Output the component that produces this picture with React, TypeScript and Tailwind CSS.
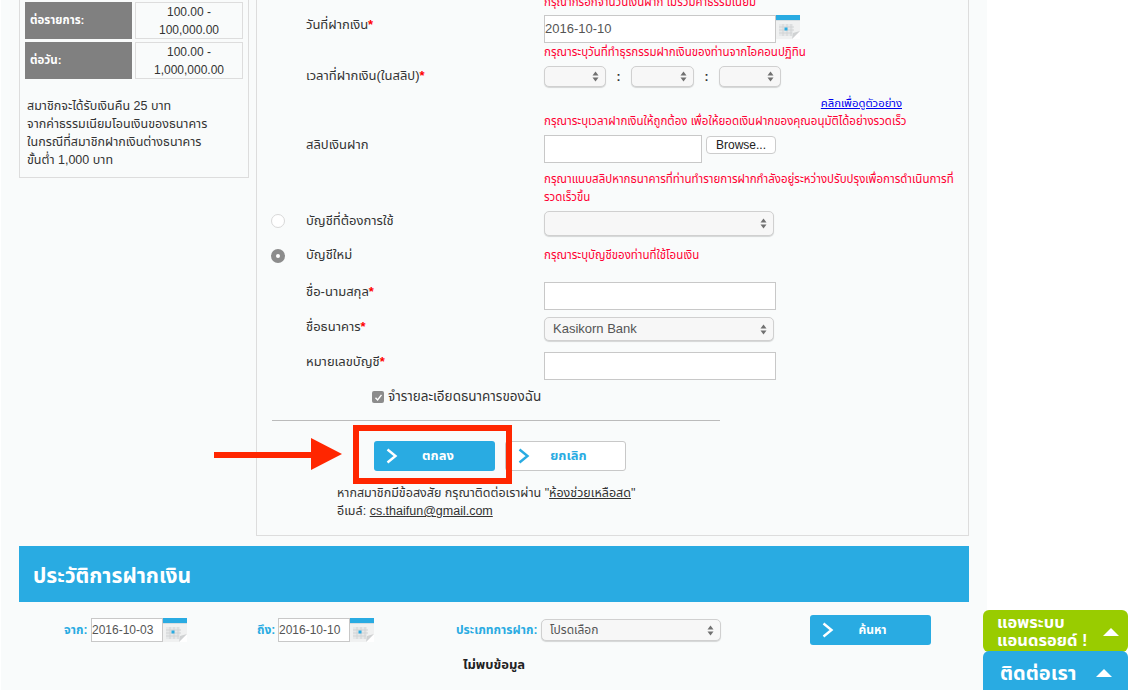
import type { ReactNode } from 'react';

const font = "font-['Liberation_Sans','Noto_Sans_Thai','Noto_Sans',sans-serif]";

function Required() {
  return <span className="font-bold text-[#ff0000]">*</span>;
}

function ErrorText({ children, className = '' }: { children: ReactNode; className?: string }) {
  return <div className={`text-[11.5px] leading-[18px] text-[#ff0033] ${className}`}>{children}</div>;
}

function Row({ radio, label, children, className = '' }: { radio?: ReactNode; label?: ReactNode; children?: ReactNode; className?: string }) {
  return (
    <div className={`grid grid-cols-[35px_238px_1fr] items-start ${className}`}>
      <div>{radio}</div>
      <div className="text-[13px] leading-[18px] text-[#333333]">{label}</div>
      <div>{children}</div>
    </div>
  );
}

function Arrows() {
  return (
    <svg width="7" height="11" viewBox="0 0 7 11" className="shrink-0">
      <path d="M3.5 0.5 L6.5 4.5 L0.5 4.5 Z" fill="#707070" />
      <path d="M3.5 10.5 L6.5 6.5 L0.5 6.5 Z" fill="#707070" />
    </svg>
  );
}

function SelectBox({ text, className = '' }: { text?: string; className?: string }) {
  return (
    <div className={`flex items-center justify-between rounded-[5px] border border-[#d0d0d0] bg-[#f7f7f7] pl-2 pr-[6px] text-xs text-[#555555] shadow-[0_1px_1px_rgba(0,0,0,0.15)] ${className}`}>
      <span>{text}</span>
      <Arrows />
    </div>
  );
}

function TextBox({ value, className = '' }: { value?: string; className?: string }) {
  return (
    <div className={`flex items-center border border-[#c8c8c8] bg-white text-xs text-[#555555] ${className}`}>
      {value}
    </div>
  );
}

function CalendarIcon() {
  return (
    <svg width="24" height="24" viewBox="0 0 24 24" className="shrink-0">
      <rect x="0" y="0" width="24" height="24" fill="#f0f1f1" />
      <rect x="0" y="0" width="24" height="5" fill="#29abe2" />
      <rect x="0" y="5" width="24" height="1" fill="#d6dde0" />
      <rect x="3" y="9" width="14" height="12" fill="#e6e8e9" />
      <path d="M3 12H18M3 15H18M3 18H16M7 9V21M11 9V21M15 9V21" stroke="#d2d4d5" strokeWidth="1" />
      <rect x="8.5" y="12.5" width="3" height="3" fill="#29abe2" />
      <path d="M16 24 L24 16 L24 24 Z" fill="#ffffff" />
      <path d="M16 24 L24 16 L17 18 Z" fill="#d0d2d3" />
    </svg>
  );
}

function Chevron({ color, className = '' }: { color: string; className?: string }) {
  return (
    <svg width="12" height="16" viewBox="0 0 12 16" fill="none" className={className}>
      <path d="M1.5 1.5 L9.5 8 L1.5 14.5" stroke={color} strokeWidth="2.4" />
    </svg>
  );
}

function ActionButton({ text, filled, className = '' }: { text: string; filled?: boolean; className?: string }) {
  return (
    <div className={`relative flex items-center justify-center rounded-[3px] font-bold ${filled ? 'bg-[#29abe2] text-white' : 'border border-[#c8c8c8] bg-white text-[#29abe2]'} ${className}`}>
      <Chevron color={filled ? '#ffffff' : '#29abe2'} className="absolute left-3 top-1/2 -translate-y-1/2" />
      {text}
    </div>
  );
}

function Radio({ checked }: { checked?: boolean }) {
  return (
    <div className={`mt-[3px] flex h-[14px] w-[14px] items-center justify-center rounded-full ${checked ? 'bg-[#8c8c8c]' : 'border border-[#d8d8d8] bg-white'}`}>
      {checked && <div className="h-1 w-1 rounded-full bg-white" />}
    </div>
  );
}

function SideRow({ label, top, bottom }: { label: string; top: string; bottom: string }) {
  return (
    <div className="flex gap-[3px]">
      <div className="flex h-[37px] w-[107px] items-center bg-[#808080] pl-[5px] text-[11.5px] font-bold text-white">{label}</div>
      <div className="flex h-[37px] w-[108px] flex-col items-center justify-center border border-[#dddddd] text-xs leading-[18px] text-[#333333]">
        <span>{top}</span>
        <span>{bottom}</span>
      </div>
    </div>
  );
}

function Sidebar() {
  return (
    <aside className="h-[178px] w-[230px] border-x border-b border-[#dddddd] px-[5px] pt-[2px]">
      <div className="flex flex-col gap-[3px]">
        <SideRow label="ต่อรายการ:" top="100.00 -" bottom="100,000.00" />
        <SideRow label="ต่อวัน:" top="100.00 -" bottom="1,000,000.00" />
      </div>
      <div className="mt-[18px] pl-[2px] text-[12.5px] leading-[18px] text-[#333333]">
        <div>สมาชิกจะได้รับเงินคืน 25 บาท</div>
        <div>จากค่าธรรมเนียมโอนเงินของธนาคาร</div>
        <div>ในกรณีที่สมาชิกฝากเงินต่างธนาคาร</div>
        <div>ขั้นต่ำ 1,000 บาท</div>
      </div>
    </aside>
  );
}

function DepositForm() {
  return (
    <section className="ml-[7px] h-[536px] w-[713px] border-x border-b border-[#dddddd] pl-[14px]">
      <Row className="h-[15px]">
        <ErrorText className="-mt-[7px] whitespace-nowrap">กรุณากรอกจำนวนเงินฝาก ไม่รวมค่าธรรมเนียม</ErrorText>
      </Row>
      <Row label={<div className="pt-px">วันที่ฝากเงิน<Required /></div>}>
        <div className="flex items-start">
          <TextBox value="2016-10-10" className="h-[28px] w-[232px] text-[13px]" />
          <CalendarIcon />
        </div>
      </Row>
      <Row>
        <ErrorText className="whitespace-nowrap">กรุณาระบุวันที่ทำธุรกรรมฝากเงินของท่านจากไอคอนปฏิทิน</ErrorText>
      </Row>
      <Row className="mt-[5px]" label={<div className="pt-px">เวลาที่ฝากเงิน(ในสลิป)<Required /></div>}>
        <div className="flex items-center text-xs font-bold text-[#333333]">
          <SelectBox className="h-[21px] w-[62px]" />
          <span className="w-[25px] text-center">:</span>
          <SelectBox className="h-[21px] w-[63px]" />
          <span className="w-[25px] text-center">:</span>
          <SelectBox className="h-[21px] w-[62px]" />
        </div>
      </Row>
      <Row className="mt-[7px]">
        <div className="w-[358px] text-right text-[11.3px] leading-[18px] text-[#0000ee] underline">คลิกเพื่อดูตัวอย่าง</div>
      </Row>
      <Row>
        <ErrorText className="whitespace-nowrap">กรุณาระบุเวลาฝากเงินให้ถูกต้อง เพื่อให้ยอดเงินฝากของคุณอนุมัติได้อย่างรวดเร็ว</ErrorText>
      </Row>
      <Row className="mt-[5px]" label={<div className="pt-px">สลิปเงินฝาก</div>}>
        <div className="flex items-start">
          <TextBox className="h-[28px] w-[158px]" />
          <div className="ml-1 mt-px flex h-[18px] w-[70px] items-center justify-center rounded-[4px] border border-[#cccccc] bg-white text-xs text-[#222222]">Browse...</div>
        </div>
      </Row>
      <Row className="mt-[7px]">
        <ErrorText className="w-[410px]">กรุณาแนบสลิปหากธนาคารที่ท่านทำรายการฝากกำลังอยู่ระหว่างปรับปรุงเพื่อการดำเนินการที่รวดเร็วขึ้น</ErrorText>
      </Row>
      <Row className="mt-[5px]" radio={<Radio />} label={<div className="pt-px">บัญชีที่ต้องการใช้</div>}>
        <SelectBox className="h-[25px] w-[230px]" />
      </Row>
      <Row className="mt-[10px]" radio={<Radio checked />} label="บัญชีใหม่">
        <ErrorText>กรุณาระบุบัญชีของท่านที่ใช้โอนเงิน</ErrorText>
      </Row>
      <Row className="mt-[18px]" label={<div className="pt-px">ชื่อ-นามสกุล<Required /></div>}>
        <TextBox className="h-[28px] w-[232px]" />
      </Row>
      <Row className="mt-[7px]" label={<div className="pt-px">ชื่อธนาคาร<Required /></div>}>
        <SelectBox text="Kasikorn Bank" className="h-[24px] w-[230px] text-[13px]" />
      </Row>
      <Row className="mt-[11px]" label={<div className="pt-px">หมายเลขบัญชี<Required /></div>}>
        <TextBox className="h-[28px] w-[232px]" />
      </Row>
      <div className="ml-[101px] mt-2 flex h-[18px] items-center gap-1 text-[13.5px] text-[#333333]">
        <div className="flex h-3 w-3 items-center justify-center rounded-[2px] bg-[#8c8c8c]">
          <svg width="9" height="9" viewBox="0 0 9 9" fill="none">
            <path d="M1.5 4.8 L3.6 7 L7.5 1.8" stroke="#ffffff" strokeWidth="1.4" />
          </svg>
        </div>
        จำรายละเอียดธนาคารของฉัน
      </div>
      <div className="ml-px mt-[14px] h-px w-[448px] bg-[#bbbbbb]" />
      <div className="ml-[103px] mt-5 flex gap-[10px] text-[13px]">
        <ActionButton filled text="ตกลง" className="h-[30px] w-[121px] pl-[7px]" />
        <ActionButton text="ยกเลิก" className="h-[30px] w-[121px] pl-[6px]" />
      </div>
      <div className="ml-[66px] mt-[13px] text-[12.5px] leading-[18px] text-[#333333]">
        <div>หากสมาชิกมีข้อสงสัย กรุณาติดต่อเราผ่าน "<span className="underline">ห้องช่วยเหลือสด</span>"</div>
        <div>อีเมล์: <span className="underline">cs.thaifun@gmail.com</span></div>
      </div>
    </section>
  );
}

function History() {
  return (
    <section className="ml-[18px] mt-[10px] w-[950px]">
      <div className="flex h-[56px] items-center bg-[#29abe2] pl-[14px] pt-1 text-[21px] font-bold text-white">ประวัติการฝากเงิน</div>
      <div className="mt-[13px] flex items-center">
        <span className="ml-[45px] w-[27px] text-xs font-bold text-[#29abe2]">จาก:</span>
        <TextBox value="2016-10-03" className="h-[24px] w-[72px]" />
        <CalendarIcon />
        <span className="ml-[70px] w-[21px] text-xs font-bold text-[#29abe2]">ถึง:</span>
        <TextBox value="2016-10-10" className="h-[24px] w-[72px]" />
        <CalendarIcon />
        <span className="ml-[82px] w-[85px] whitespace-nowrap text-xs font-bold text-[#29abe2]">ประเภทการฝาก:</span>
        <SelectBox text="โปรดเลือก" className="h-[22px] w-[180px]" />
        <ActionButton filled text="ค้นหา" className="ml-[89px] h-[30px] w-[121px] pl-1 text-xs" />
      </div>
      <div className="mt-[11px] text-center text-[13px] font-bold leading-[18px] text-[#222222]">ไม่พบข้อมูล</div>
    </section>
  );
}

function FloatingTabs() {
  return (
    <div className="absolute right-px top-[610px] flex w-[145px] flex-col text-white">
      <div className="flex h-[42px] items-center justify-between rounded-[6px] bg-[#99cc00] pl-[14px] pr-[9px] text-[16.5px] font-bold leading-[18px]">
        <div>แอพระบบ<br />แอนดรอยด์ !</div>
        <div className="mt-[2px] h-0 w-0 border-x-[8px] border-b-[8px] border-x-transparent border-b-white" />
      </div>
      <div className="-mt-px flex h-[39px] items-center justify-between rounded-t-[6px] bg-[#29abe2] pl-[17px] pr-[16px] pt-1 text-xl font-bold">
        <div>ติดต่อเรา</div>
        <div className="h-0 w-0 border-x-[8px] border-b-[8px] border-x-transparent border-b-white" />
      </div>
    </div>
  );
}

function Annotation() {
  return (
    <>
      <div className="absolute left-[353px] top-[425px] h-[59px] w-[159px] border-[6px] border-[#ff2600]" />
      <svg width="128" height="32" viewBox="0 0 128 32" className="absolute left-[214px] top-[438px]">
        <path d="M0 14 H97 V0 L128 16 L97 32 V20 H0 Z" fill="#ff2600" />
      </svg>
    </>
  );
}

export default function App() {
  return (
    <div className={`relative h-[690px] w-[1129px] overflow-hidden bg-white ${font}`}>
      <main className="ml-px h-full w-[986px] bg-[#f9fbfb]">
        <div className="ml-[18px] flex items-start">
          <Sidebar />
          <DepositForm />
        </div>
        <History />
      </main>
      <Annotation />
      <FloatingTabs />
    </div>
  );
}
